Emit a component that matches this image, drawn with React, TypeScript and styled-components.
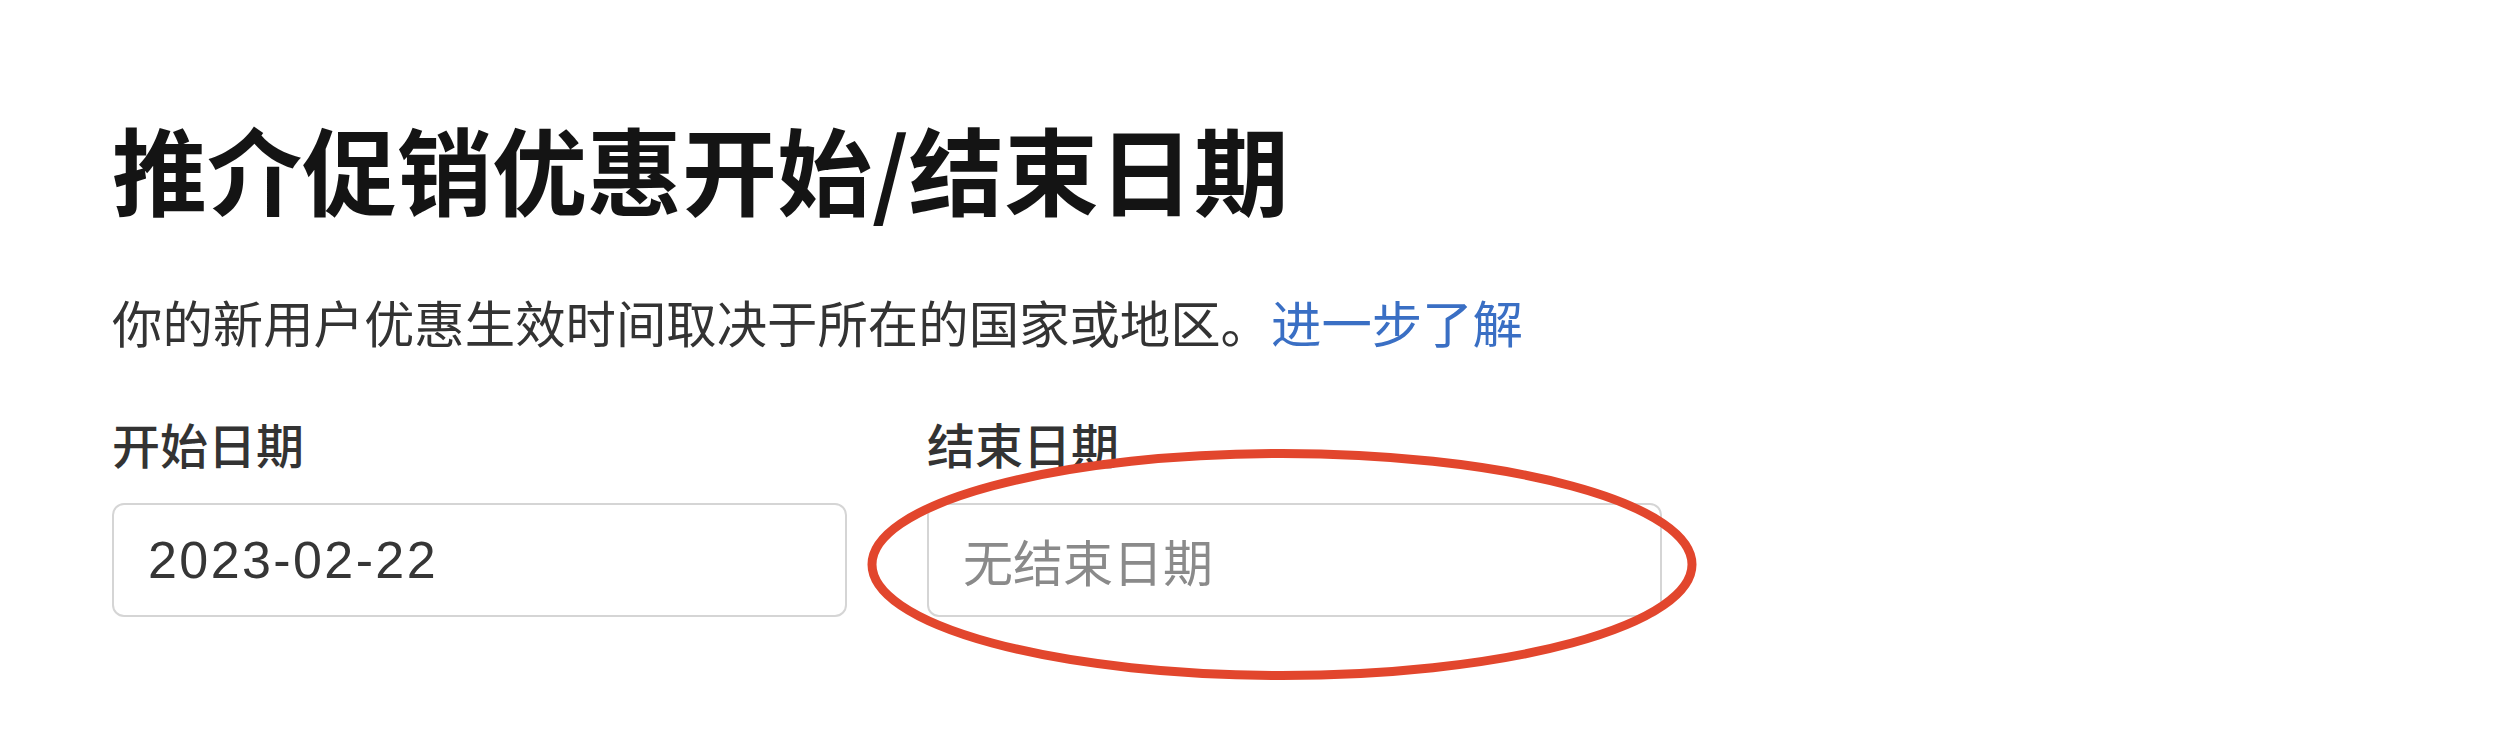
import React from "react";
import styled, { createGlobalStyle } from "styled-components";

const GlobalStyle = createGlobalStyle`
  html, body {
    margin: 0;
    padding: 0;
    background: #ffffff;
  }
  body {
    font-family: "Noto Sans CJK SC", "Noto Sans", sans-serif;
    -webkit-font-smoothing: antialiased;
  }
`;

const Page = styled.main`
  display: flex;
  flex-direction: column;
  align-items: flex-start;
  padding: 120px 0 0 112px;
  width: 2514px;
  height: 756px;
  box-sizing: border-box;
  background: #ffffff;
`;

const Title = styled.h1`
  margin: 0;
  font-family: "Noto Sans CJK SC", sans-serif;
  font-size: 95px;
  line-height: 96px;
  font-weight: 700;
  color: #141414;
  letter-spacing: 0;
`;

const Description = styled.p`
  margin: 81px 0 0 0;
  font-family: "Noto Sans CJK SC", sans-serif;
  font-size: 50.4px;
  line-height: 50px;
  font-weight: 400;
  color: #333333;
`;

const Link = styled.a`
  color: #3a6fc4;
  text-decoration: none;
`;

const FieldGrid = styled.div`
  display: grid;
  grid-template-columns: 735px 735px;
  column-gap: 80px;
  margin-top: 72px;
`;

const FieldGroup = styled.div`
  display: flex;
  flex-direction: column;
  gap: 36px;
`;

const Label = styled.label`
  font-family: "Noto Sans CJK SC", sans-serif;
  font-size: 48px;
  line-height: 48px;
  font-weight: 500;
  color: #333333;
`;

const InputWrap = styled.div`
  position: relative;
`;

const Field = styled.div<{ $placeholder?: boolean }>`
  display: flex;
  align-items: center;
  box-sizing: border-box;
  height: 114px;
  padding: 0 34px;
  border: 2px solid #d5d5d5;
  border-radius: 12px;
  background: #ffffff;
  font-family: ${(p) =>
    p.$placeholder
      ? `"Noto Sans CJK SC", sans-serif`
      : `"Liberation Sans", "Noto Sans CJK SC", sans-serif`};
  font-size: ${(p) => (p.$placeholder ? "50px" : "52px")};
  letter-spacing: ${(p) => (p.$placeholder ? "0" : "2.4px")};
  color: ${(p) => (p.$placeholder ? "#8a8a8a" : "#363636")};
`;

const Annotation = styled.svg`
  position: absolute;
  left: -60px;
  top: -54px;
  width: 830px;
  height: 231px;
  pointer-events: none;
  overflow: visible;
`;

export default function App() {
  return (
    <>
      <GlobalStyle />
      <Page>
        <Title>推介促销优惠开始/结束日期</Title>
        <Description>
          你的新用户优惠生效时间取决于所在的国家或地区。
          <Link href="#">进一步了解</Link>
        </Description>
        <FieldGrid>
          <FieldGroup>
            <Label>开始日期</Label>
            <InputWrap>
              <Field>2023-02-22</Field>
            </InputWrap>
          </FieldGroup>
          <FieldGroup>
            <Label>结束日期</Label>
            <InputWrap>
              <Field $placeholder>无结束日期</Field>
              <Annotation viewBox="0 0 830 231">
                <ellipse
                  cx="415"
                  cy="115.5"
                  rx="410"
                  ry="111"
                  fill="none"
                  stroke="#e2462d"
                  strokeWidth="9"
                />
              </Annotation>
            </InputWrap>
          </FieldGroup>
        </FieldGrid>
      </Page>
    </>
  );
}
